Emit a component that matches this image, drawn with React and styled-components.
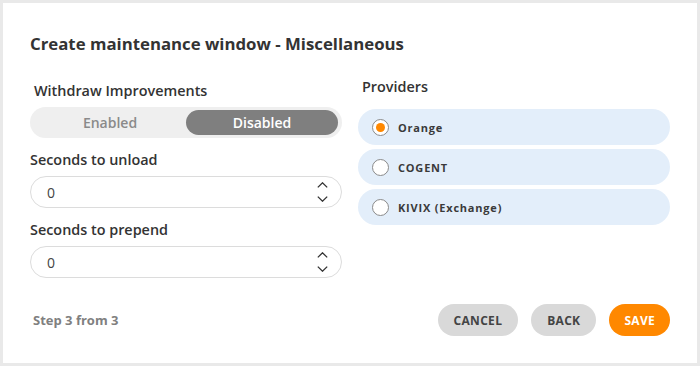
import styled, { createGlobalStyle } from 'styled-components';

const GlobalStyle = createGlobalStyle`
  html, body {
    margin: 0;
    padding: 0;
    background: #e9e9e9;
    font-family: 'Open Sans', 'Noto Sans', sans-serif;
  }
`;

const Page = styled.div`
  width: 700px;
  height: 366px;
  padding: 3px;
  box-sizing: border-box;
`;

const Card = styled.div`
  background: #fff;
  height: 100%;
  box-sizing: border-box;
  padding: 30px 27px 0 27px;
  display: flex;
  flex-direction: column;
`;

const Title = styled.h2`
  margin: 0;
  font-size: 16.8px;
  line-height: 22px;
  font-weight: 700;
  color: #333;
`;

const Columns = styled.div`
  display: grid;
  grid-template-columns: 312px 312px;
  column-gap: 16px;
  margin-top: 22px;
`;

const Column = styled.div`
  display: flex;
  flex-direction: column;
`;

const Label = styled.div`
  font-size: 14.4px;
  font-weight: 600;
  color: #333;
  line-height: 20px;
  padding-left: ${(p) => p.$indent || 0}px;
  margin-top: ${(p) => p.$top || 0}px;
  margin-bottom: ${(p) => p.$bottom || 6}px;
`;

const Toggle = styled.div`
  display: flex;
  height: 31px;
  background: #efefef;
  border-radius: 16px;
  padding: 3px 4px;
  box-sizing: border-box;
`;

const ToggleOption = styled.div`
  flex: 1;
  display: flex;
  align-items: center;
  justify-content: center;
  border-radius: 13px;
  font-size: 14px;
  font-weight: 600;
  color: ${(p) => (p.$active ? '#fff' : '#8a8a8a')};
  background: ${(p) => (p.$active ? '#7f7f7f' : 'transparent')};
`;

const NumberBox = styled.div`
  display: flex;
  align-items: center;
  justify-content: space-between;
  height: 32px;
  border: 1px solid #dcdcdc;
  border-radius: 16px;
  box-sizing: border-box;
  padding: 0 13px 0 16px;
  font-size: 14px;
  color: #444;
`;

const Spinner = styled.div`
  display: flex;
  flex-direction: column;
  gap: 8px;
  color: #333;
`;

const RadioList = styled.div`
  display: flex;
  flex-direction: column;
  gap: 4px;
`;

const RadioRow = styled.div`
  display: flex;
  align-items: center;
  height: 36px;
  background: #e3eefa;
  border-radius: 18px;
  padding-left: 14px;
  gap: 9px;
  font-size: 11px;
  font-weight: 700;
  letter-spacing: 0.8px;
  color: #3a3a3a;
`;

const Radio = styled.span`
  width: 17px;
  height: 17px;
  border-radius: 50%;
  border: 1px solid #8a8a8a;
  background: #fff;
  box-sizing: border-box;
  display: flex;
  align-items: center;
  justify-content: center;

  &::after {
    content: '';
    width: 9px;
    height: 9px;
    border-radius: 50%;
    background: ${(p) => (p.$checked ? '#ff8800' : 'transparent')};
  }
`;

const Footer = styled.div`
  display: flex;
  align-items: center;
  justify-content: space-between;
  margin-top: auto;
  margin-bottom: 27px;
  padding-left: 3px;
`;

const StepText = styled.div`
  font-size: 13px;
  font-weight: 700;
  color: #808080;
`;

const Buttons = styled.div`
  display: flex;
  gap: 13px;
`;

const Button = styled.button`
  height: 32px;
  border: none;
  border-radius: 16px;
  padding: 0 ${(p) => p.$px || 16}px;
  font-family: inherit;
  font-size: 12px;
  font-weight: 700;
  letter-spacing: 0.3px;
  background: ${(p) => (p.$primary ? '#ff8800' : '#d9d9d9')};
  color: ${(p) => (p.$primary ? '#fff' : '#444')};
`;

const Chevron = ({ up }) => (
  <svg width="11" height="6" viewBox="0 0 11 6" fill="none" stroke="currentColor" strokeWidth="1.3">
    <path d={up ? 'M0.8 5.4 L5.5 0.8 L10.2 5.4' : 'M0.8 0.6 L5.5 5.2 L10.2 0.6'} />
  </svg>
);

function NumberInput({ value }) {
  return (
    <NumberBox>
      <span>{value}</span>
      <Spinner>
        <Chevron up />
        <Chevron />
      </Spinner>
    </NumberBox>
  );
}

const providers = [
  { name: 'Orange', checked: true },
  { name: 'COGENT' },
  { name: 'KIVIX (Exchange)' },
];

export default function App() {
  return (
    <Page>
      <GlobalStyle />
      <Card>
        <Title>Create maintenance window - Miscellaneous</Title>
        <Columns>
          <Column>
            <Label $indent={4} $top={4} $bottom={6}>Withdraw Improvements</Label>
            <Toggle>
              <ToggleOption>Enabled</ToggleOption>
              <ToggleOption $active>Disabled</ToggleOption>
            </Toggle>
            <Label $top={12} $bottom={6}>Seconds to unload</Label>
            <NumberInput value="0" />
            <Label $top={12} $bottom={6}>Seconds to prepend</Label>
            <NumberInput value="0" />
          </Column>
          <Column>
            <Label $indent={4} $bottom={12}>Providers</Label>
            <RadioList>
              {providers.map((p) => (
                <RadioRow key={p.name}>
                  <Radio $checked={p.checked} />
                  {p.name}
                </RadioRow>
              ))}
            </RadioList>
          </Column>
        </Columns>
        <Footer>
          <StepText>Step 3 from 3</StepText>
          <Buttons>
            <Button>CANCEL</Button>
            <Button>BACK</Button>
            <Button $primary $px={15}>SAVE</Button>
          </Buttons>
        </Footer>
      </Card>
    </Page>
  );
}
